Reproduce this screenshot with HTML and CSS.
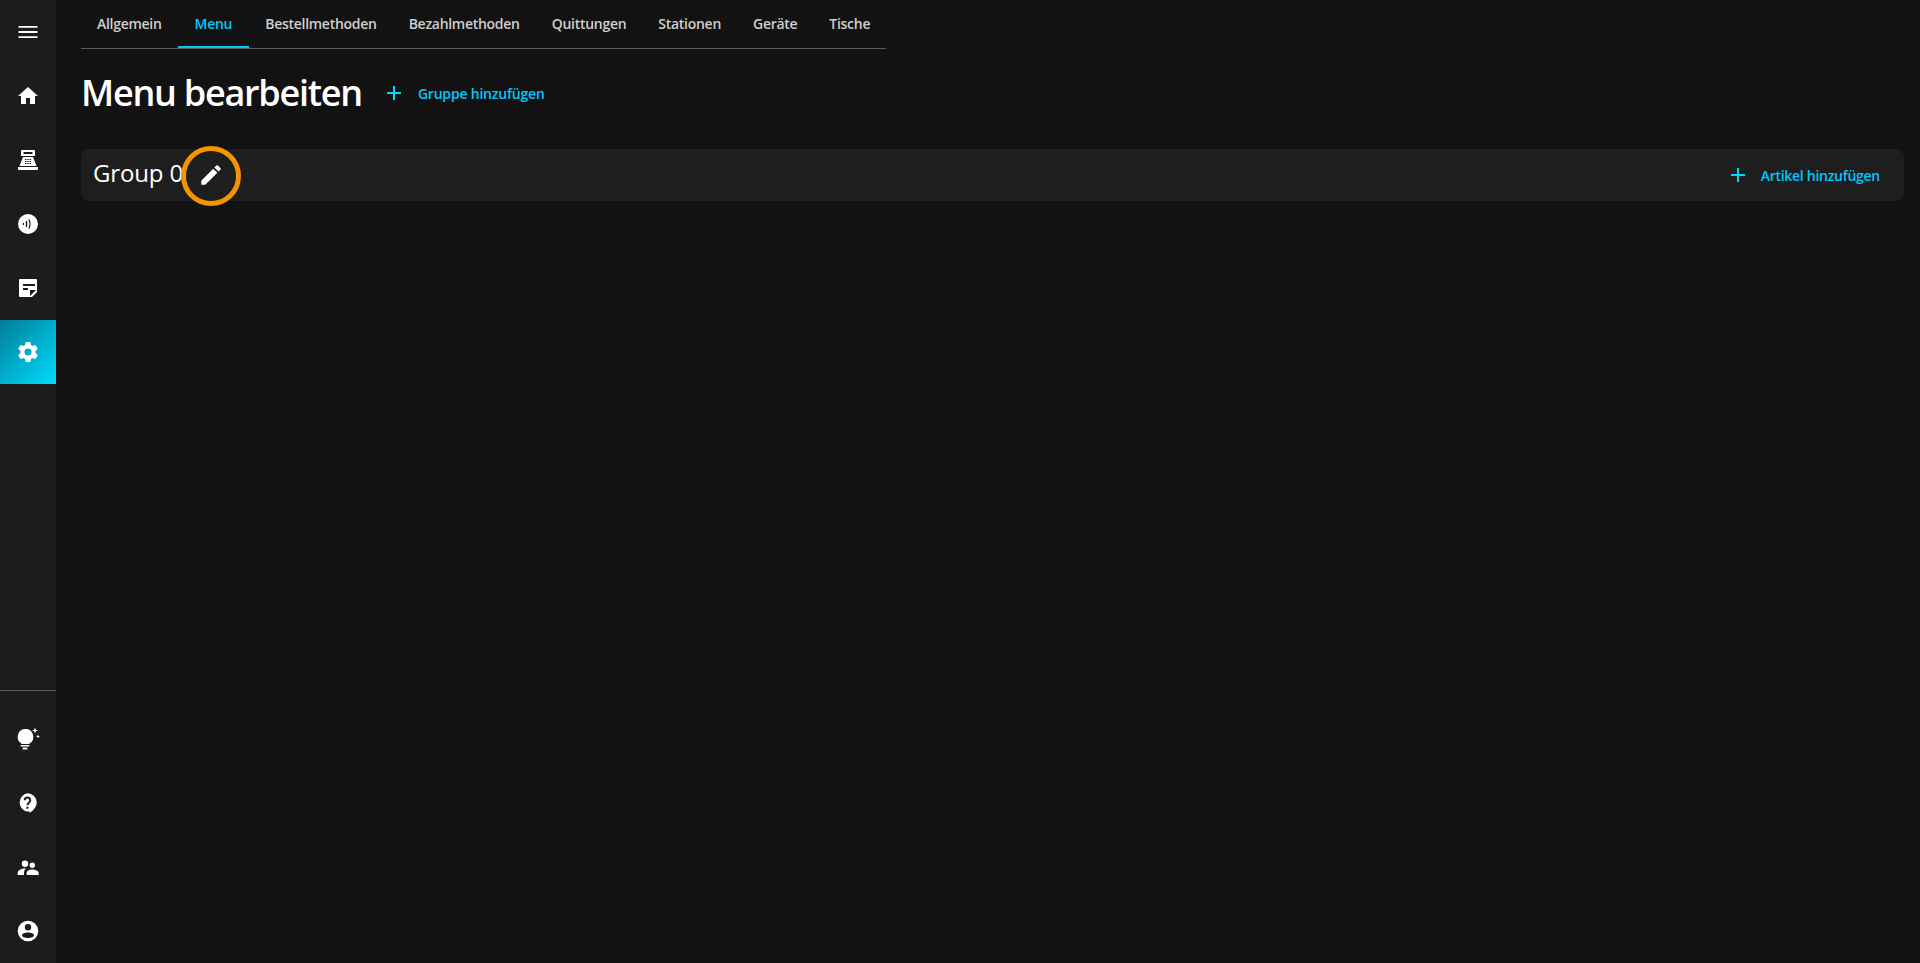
FILE: index.html
```html
<!DOCTYPE html>
<html lang="de">
<head>
<meta charset="utf-8">
<title>Menu bearbeiten</title>
<link rel="stylesheet" href="styles.css">
</head>
<body>
<div class="app">
  <nav class="sidebar">
    <div class="nav-group">
      <a class="nav-item"><svg class="icon" viewBox="0 0 24 24"><path d="M2.500 18h19v-1.800h-19V18zm0-5.100h19v-1.800h-19v1.800zm0-6.900v1.800h19V6h-19z"/></svg></a>
      <a class="nav-item"><svg class="icon" viewBox="0 0 24 24"><path d="M10 20v-6h4v6h5v-8h3L12 3 2 12h3v8z"/></svg></a>
      <a class="nav-item"><svg class="icon" viewBox="0 0 24 24"><path fill-rule="evenodd" d="M6 2h12a1 1 0 0 1 1 1v4a1 1 0 0 1-1 1H6a1 1 0 0 1-1-1V3a1 1 0 0 1 1-1zm1.500 2v2h9V4h-9zM7 9h10l3.500 9h-17L7 9zm2 2v1h1.500v-1H9zm2.300 0v1h1.500v-1h-1.500zm2.300 0v1h1.500v-1h-1.500zM9 13v1h1.500v-1H9zm2.300 0v1h1.500v-1h-1.500zm2.300 0v1h1.500v-1h-1.500zM9 15v1h1.500v-1H9zm2.300 0v1h1.500v-1h-1.500zm2.300 0v1h1.500v-1h-1.500zM2 19h20v2a1 1 0 0 1-1 1H3a1 1 0 0 1-1-1v-2z"/></svg></a>
      <a class="nav-item"><svg class="icon" viewBox="0 0 24 24"><path fill-rule="evenodd" d="M12 2a10 10 0 1 1 0 20 10 10 0 0 1 0-20zM6.800 11v2H8v-2H6.800zm3-2v6h1.400V9H9.800zM13.300 7l-1 .5c1.500 2.900 1.500 6.100 0 9l1 .5c1.800-3.200 1.800-6.800 0-10z"/></svg></a>
      <a class="nav-item"><svg class="icon" viewBox="0 0 24 24"><path fill-rule="evenodd" d="M4 3h16a1 1 0 0 1 1 1v12l-5 5H4a1 1 0 0 1-1-1V4a1 1 0 0 1 1-1zm3 5v2h12V8H7zm0 4v2h5v-2H7zm7 2v6l6-6h-6z"/></svg></a>
      <a class="nav-item active"><svg class="icon" viewBox="0 0 24 24"><path d="M19.430 12.980c.04-.32.07-.64.07-.98s-.03-.66-.07-.98l2.110-1.650c.19-.15.24-.42.120-.64l-2-3.460c-.12-.22-.39-.3-.61-.22l-2.490 1c-.52-.4-1.080-.73-1.690-.98l-.38-2.650A.488.488 0 0 0 14 2h-4c-.25 0-.46.18-.49.420l-.38 2.650c-.61.25-1.170.59-1.690.98l-2.490-1c-.23-.09-.49 0-.61.220l-2 3.460c-.13.220-.07.490.120.640l2.110 1.650c-.04.320-.07.650-.07.980s.03.660.07.980l-2.110 1.650c-.19.150-.24.420-.12.640l2 3.460c.12.220.39.300.61.220l2.490-1c.52.400 1.080.730 1.690.980l.38 2.650c.03.240.24.420.49.420h4c.25 0 .46-.18.49-.42l.38-2.650c.61-.25 1.170-.59 1.690-.98l2.490 1c.23.090.49 0 .61-.22l2-3.460c.12-.22.070-.49-.12-.64l-2.110-1.650zM12 15.500A3.500 3.500 0 1 1 12 8.500a3.500 3.500 0 0 1 0 7z"/></svg></a>
    </div>
    <div class="nav-group nav-bottom">
      <a class="nav-item"><svg class="icon" viewBox="0 0 24 24"><path d="M9.500 2a7.800 7.800 0 0 1 4 14.500v.6h-8v-.6A7.800 7.800 0 0 1 9.500 2zM4.700 18h8.600v1.500H4.700zM6.700 20.500h4.600v2H6.700zM19 .5l.8 2.200 2.200.8-2.200.8L19 6.500l-.8-2.200-2.200-.8 2.200-.8zM22 7.500l.6 1.400 1.400.6-1.400.6-.6 1.400-.6-1.400-1.400-.6 1.400-.6z"/></svg></a>
      <a class="nav-item"><svg class="icon" viewBox="0 0 24 24"><path fill-rule="evenodd" d="M11.500 2.300a9.200 9.200 0 0 1 9.200 9.200c0 4.600-3.800 8.200-7 10.500v-1.500h-2.200a9.200 9.200 0 0 1 0-18.200zm-1.200 13.500v2h2.100v-2h-2.100zM11.500 5.500a3.800 3.800 0 0 0-3.800 3.800h2a1.800 1.800 0 1 1 3.100 1.300c-1.100 1-2.200 1.900-2.200 3.700h2c0-1.200.9-1.700 1.700-2.500a3.800 3.800 0 0 0-2.800-6.300z"/></svg></a>
      <a class="nav-item"><svg class="icon" viewBox="0 0 24 24"><path d="M9 12a3.200 3.200 0 1 0 0-6.400A3.200 3.200 0 0 0 9 12zM16.300 13a2.700 2.700 0 1 0 0-5.400 2.700 2.700 0 0 0 0 5.400zM9.700 13.500C5.700 13.300 1.700 15 1.700 18v2H8v-2c0-1.700.6-3.400 1.700-4.500zM16.300 14.500c-2.800 0-5.600 1.200-5.600 3.500v2h12v-2c0-2.300-3.600-3.500-6.400-3.500z"/></svg></a>
      <a class="nav-item"><svg class="icon" viewBox="0 0 24 24"><path fill-rule="evenodd" d="M12 1.700a10.300 10.300 0 1 1 0 20.600 10.300 10.300 0 0 1 0-20.600zM12 5a3.200 3.200 0 1 0 0 6.400A3.200 3.200 0 0 0 12 5zm0 8.500c-3.400 0-6 1.100-6 2.800s2.600 2.700 6 2.700 6-1 6-2.700-2.600-2.800-6-2.800z"/></svg></a>
    </div>
  </nav>
  <main class="content">
    <div class="tabs">
      <a class="tab">Allgemein</a>
      <a class="tab tab-active">Menu</a>
      <a class="tab">Bestellmethoden</a>
      <a class="tab">Bezahlmethoden</a>
      <a class="tab">Quittungen</a>
      <a class="tab">Stationen</a>
      <a class="tab">Geräte</a>
      <a class="tab">Tische</a>
    </div>
    <header class="page-head">
      <h1 class="page-title">Menu bearbeiten</h1>
      <a class="add-btn"><svg class="plus" viewBox="0 0 16 16"><path d="M7 1h2v6h6v2H9v6H7V9H1V7h6z"/></svg>Gruppe hinzufügen</a>
    </header>
    <section class="group">
      <div class="group-left">
        <span class="group-name">Group 0</span>
        <span class="edit-ring"><svg class="edit-icon" viewBox="0 0 24 24"><path d="M3 17.250V21h3.750L17.810 9.940l-3.750-3.750L3 17.250zM20.710 7.040a1 1 0 0 0 0-1.410l-2.340-2.340a1 1 0 0 0-1.410 0l-1.830 1.830 3.750 3.750 1.830-1.830z"/></svg></span>
      </div>
      <a class="add-btn add-item"><svg class="plus" viewBox="0 0 16 16"><path d="M7 1h2v6h6v2H9v6H7V9H1V7h6z"/></svg>Artikel hinzufügen</a>
    </section>
  </main>
</div>
</body>
</html>
```
FILE: styles.css
```css
* { box-sizing: border-box; }
html, body { margin: 0; height: 100%; }
body {
  background: #121212;
  color: #fff;
  font-family: "Open Sans", "Noto Sans", sans-serif;
  overflow: hidden;
}
.app { display: flex; height: 963px; }
.sidebar {
  width: 57px;
  flex: none;
  background: #1c1c1c;
  border-right: 1px solid #161616;
  display: flex;
  flex-direction: column;
  justify-content: space-between;
}
.nav-group { display: flex; flex-direction: column; }
.nav-bottom { border-top: 1px solid #5a5a5a; padding-top: 16px; }
.nav-item {
  height: 64px;
  display: flex;
  align-items: center;
  justify-content: center;
}
.nav-item.active {
  background: linear-gradient(135deg, #007d99 0%, #00dcff 100%);
}
.icon { width: 24px; height: 24px; fill: #fff; display: block; }
.content { flex: 1; min-width: 0; padding: 0 16px 0 24px; }
.tabs {
  display: inline-flex;
  border-bottom: 1px solid #5c5c5c;
  height: 49px;
  vertical-align: top;
}
.tab {
  display: flex;
  align-items: center;
  padding: 0 16px 2px;
  height: 48px;
  font-size: 14px;
  font-weight: 600;
  letter-spacing: -0.28px;
  color: #cfcfcf;
  margin-bottom: -1px;
}
.tab-active {
  color: #00c8ff;
  border-bottom: 2px solid #00c8f5;
  padding: 0 17px;
}
.page-head {
  display: flex;
  align-items: center;
  margin-top: 12px;
  height: 64px;
}
.page-title {
  margin: 0 24px 0 0;
  font-size: 36px;
  line-height: 44px;
  font-weight: 600;
  letter-spacing: -1.25px;
}
.add-btn {
  display: inline-flex;
  align-items: center;
  gap: 16px;
  font-size: 14px;
  font-weight: 600;
  letter-spacing: -0.2px;
  color: #00c8ff;
}
.add-item { gap: 15px; letter-spacing: -0.28px; }
.plus { width: 16px; height: 16px; fill: #00d8ff; display: block; }
.group {
  margin-top: 24px;
  height: 52px;
  background: #1e1e1e;
  border-radius: 8px;
  padding: 0 24px 0 12px;
  display: flex;
  align-items: center;
  justify-content: space-between;
}
.group-left { display: flex; align-items: center; }
.group-name { font-size: 24px; line-height: 32px; letter-spacing: -0.15px; padding-bottom: 4px; }
.edit-ring {
  width: 60px;
  height: 60px;
  border: 5px solid #f39500;
  border-radius: 50%;
  display: flex;
  align-items: center;
  justify-content: center;
  flex: none;
  margin-top: 1px;
  margin-bottom: -1px;
  margin-left: -2px;
}
.edit-icon { width: 26px; height: 26px; fill: #fff; display: block; margin-bottom: 2px; }
```
